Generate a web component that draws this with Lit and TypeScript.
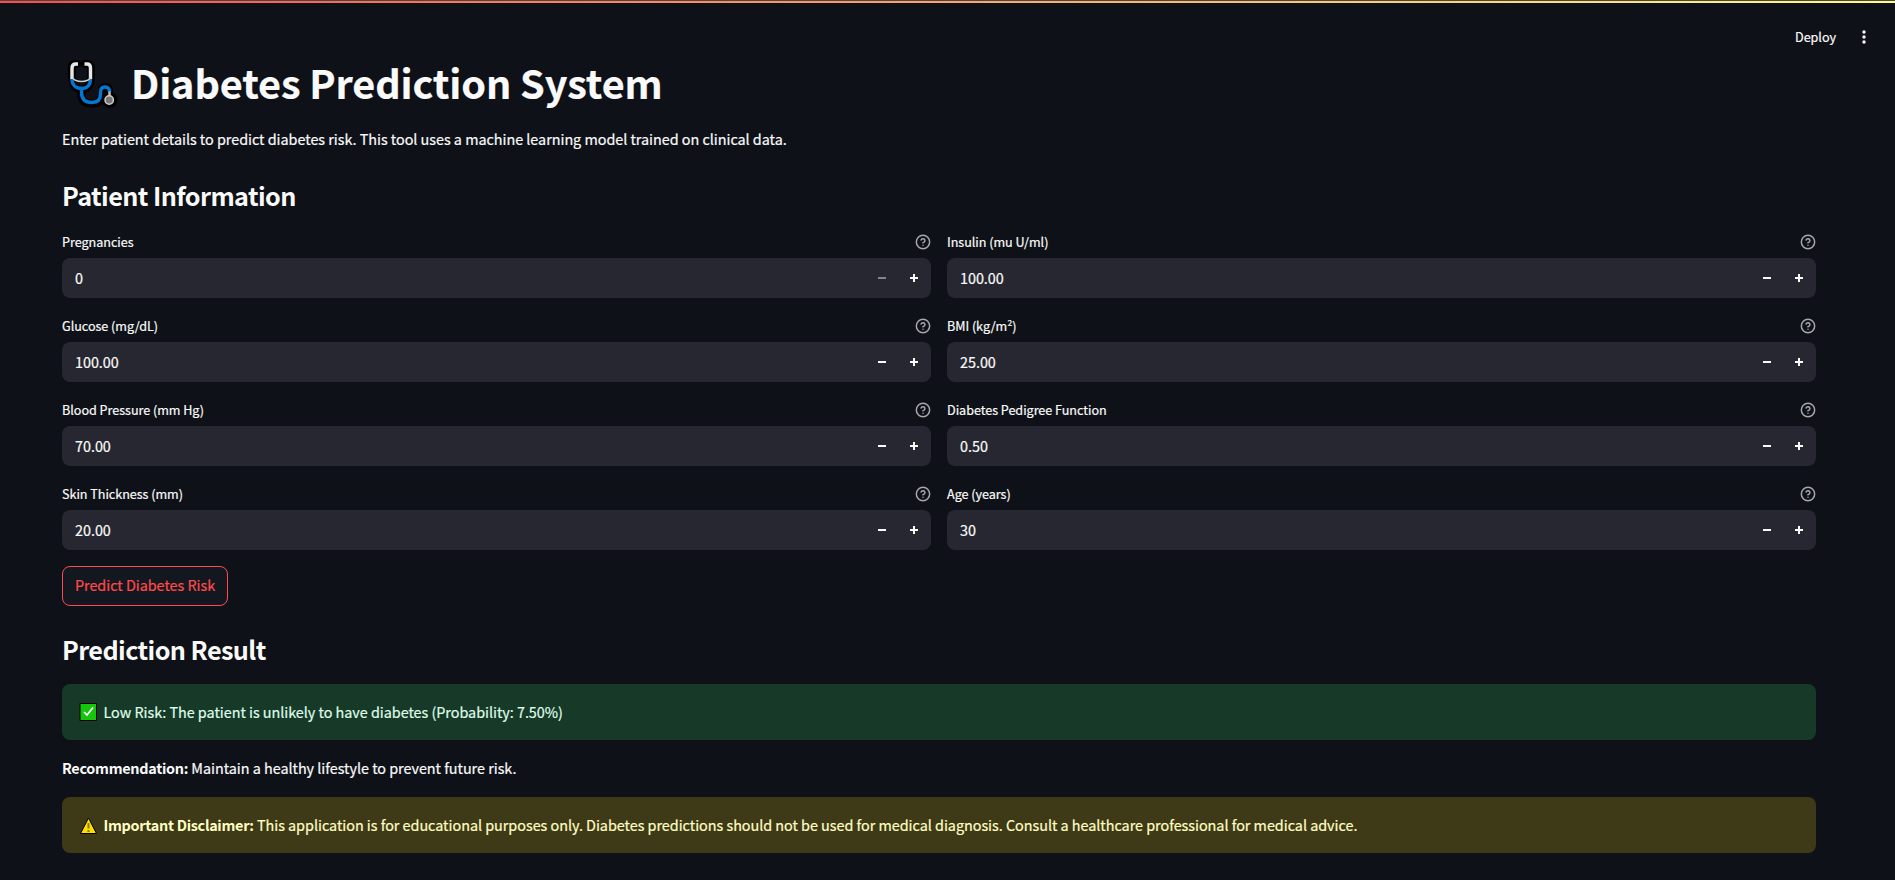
import { LitElement, html, css } from "lit";
import { customElement, property } from "lit/decorators.js";

@customElement("number-field")
class NumberField extends LitElement {
  @property() label = "";
  @property() value = "";
  @property({ type: Boolean }) atMin = false;

  static styles = css`
    :host { display: block; }
    .top { display: flex; justify-content: space-between; height: 28px; }
    .label { font-size: 12.6px; line-height: 24px; }
    .help { width: 16px; height: 16px; margin-top: 4px; display: block; }
    .box { display: flex; align-items: center; height: 40px; border-radius: 8px; background: #262730; }
    .value { flex: 1; padding-left: 13px; font-size: 14.4px; line-height: 40px; }
    .step { width: 32px; height: 40px; display: flex; align-items: center; justify-content: center; color: #fafafa; }
    .step svg { display: block; width: 8px; height: 8px; }
    .step.off { color: #808495; }
    .step.last { margin-right: 1px; }
  `;

  render() {
    return html`
      <div class="top">
        <span class="label">${this.label}</span>
        <svg class="help" viewBox="0 0 24 24" fill="none" stroke="#a6a7aa" stroke-width="2.250" stroke-linecap="round" stroke-linejoin="round">
          <circle cx="12" cy="12" r="10"></circle>
          <path d="M9.09 9a3 3 0 0 1 5.83 1c0 2-3 3-3 3"></path>
          <path d="M12 17h.01"></path>
        </svg>
      </div>
      <div class="box">
        <span class="value">${this.value}</span>
        <span class="step ${this.atMin ? "off" : ""}"><svg viewBox="0 0 8 8"><path fill="currentColor" d="M0 3h8v2H0z"></path></svg></span>
        <span class="step last"><svg viewBox="0 0 8 8"><path fill="currentColor" d="M0 3h3V0h2v3h3v2H5v3H3V5H0z"></path></svg></span>
      </div>`;
  }
}

const LEFT = [
  ["Pregnancies", "0"],
  ["Glucose (mg/dL)", "100.00"],
  ["Blood Pressure (mm Hg)", "70.00"],
  ["Skin Thickness (mm)", "20.00"],
];
const RIGHT = [
  ["Insulin (mu U/ml)", "100.00"],
  ["BMI (kg/m²)", "25.00"],
  ["Diabetes Pedigree Function", "0.50"],
  ["Age (years)", "30"],
];

@customElement("app-root")
class AppRoot extends LitElement {
  static styles = css`
    :host {
      display: block; box-sizing: border-box; height: 880px; overflow: hidden;
      background: #0e1117; color: #fafafa;
      font-family: "Noto Sans CJK SC", "Noto Sans", sans-serif;
      font-size: 14.4px; line-height: 24px; letter-spacing: -0.031px;
      -webkit-text-stroke: 0.2px currentColor;
    }
    .stripe { height: 2px; border-top: 1px solid #45474c; background: linear-gradient(90deg, #ff4b4b, #fffd80); }
    .toolbar { height: 52px; display: flex; justify-content: flex-end; padding-right: 27px; }
    .deploy { font-size: 12.6px; line-height: 24px; margin: 22px 24px 0 0; }
    .dots { width: 8px; height: 16px; margin-top: 26px; }
    .page { padding: 0 79px 0 62px; }
    h1 {
      display: flex; margin: 0; height: 53px; font-size: 39.6px; line-height: 53px; font-weight: 700;
      white-space: nowrap; letter-spacing: -0.1px;
    }
    .steth { width: 60px; height: 56px; margin: 1px 9px 0 0; }
    h2 {
      margin: 0 0 18px; font-size: 25.2px; line-height: 34px; font-weight: 600;
      letter-spacing: -0.57px; -webkit-text-stroke: 0;
    }
    p { margin: 0; }
    .intro { margin: 19px 0 27px; }
    .cols { display: grid; grid-template-columns: 1fr 1fr; gap: 16px; }
    .col { display: grid; gap: 16px; }
    .predict {
      display: block; box-sizing: border-box; width: 166px; height: 40px; margin: 16px 0 26px; padding: 0 0 2px;
      border: 1px solid #ff4b4b; border-radius: 8px; background: #131720; color: #ff4b4b;
      font: inherit; letter-spacing: inherit; line-height: 36px; text-align: center;
    }
    .alert { display: flex; height: 24px; padding: 16px 16px 16px 17px; border-radius: 8px; }
    .ok { background: #173928; color: #dffde9; }
    .warn { background: #3e3917; color: #ffffc2; }
    .rec { margin: 16px 0 17px; }
    .emoji { width: 20px; height: 20px; margin: 2px 4.500px 0 0; }
    b { font-weight: 600; letter-spacing: -0.28px; -webkit-text-stroke: 0; }
  `;

  render() {
    return html`
      <div class="stripe"></div>
      <div class="toolbar">
        <span class="deploy">Deploy</span>
        <svg class="dots" viewBox="0 0 8 16" fill="#fafafa"><circle cx="4" cy="3" r="1.700"></circle><circle cx="4" cy="8" r="1.700"></circle><circle cx="4" cy="13" r="1.700"></circle></svg>
      </div>
      <div class="page">
        <h1>
          <svg class="steth" viewBox="0 0 60 56" fill="none" stroke-linecap="round" stroke-linejoin="round">
            <g stroke="#000" stroke-width="8">
              <path d="M15 8H13Q10 8 10 12V20Q10 33 19.500 33Q29 33 29 20V12Q29 8 26 8H23"></path>
              <path d="M19.500 33V38Q19.500 47.500 30 47.500Q40 47.500 40 38V36Q40 31 43.500 31Q47 31 47 35V42"></path>
              <circle cx="47.500" cy="44" r="4"></circle>
            </g>
            <g stroke-width="3.400" stroke-linecap="butt">
              <path stroke="#0078d4" d="M10 23C10 29 14 32.500 19.500 32.500S28.500 29 28.500 23M19.500 32.500V36Q19.500 46.500 30 46.500Q38.500 46.500 38.500 38V36.500Q38.500 31 43 31Q47.500 31 47.500 36"></path>
              <path stroke="#e6e6e6" d="M16 8H14Q10 8 10 12V23M22.500 8H25Q28.500 8 28.500 12V23"></path>
            </g>
            <path d="M11 22.500Q14 25.500 19.500 25.500T28 22.500" stroke="#cccccc" stroke-width="1.600"></path>
            <path d="M47.500 35.500V40" stroke="#bdbdbd" stroke-width="2.500" stroke-linecap="butt"></path>
            <circle cx="47.200" cy="44" r="4.200" fill="#767676" stroke="#cccccc" stroke-width="1.500"></circle>
          </svg>
          <span class="title">Diabetes Prediction System</span>
        </h1>
        <p class="intro">Enter patient details to predict diabetes risk. This tool uses a machine learning model trained on clinical data.</p>
        <h2>Patient Information</h2>
        <div class="cols">
          ${[LEFT, RIGHT].map(
            (col) => html`<div class="col">
              ${col.map(([l, v]) => html`<number-field .label=${l} .value=${v} .atMin=${v === "0"}></number-field>`)}
            </div>`
          )}
        </div>
        <button class="predict">Predict Diabetes Risk</button>
        <h2>Prediction Result</h2>
        <div class="alert ok">
          <svg class="emoji" viewBox="0 0 20 20"><path d="M1 1.500h16.500v17h-16.500z" fill="#16c60c" stroke="#000" stroke-width="1"></path><path d="M5 10l3 3 6-7.500" fill="none" stroke="#fff" stroke-width="1.700"></path></svg>
          <span>Low Risk: The patient is unlikely to have diabetes (Probability: 7.50%)</span>
        </div>
        <p class="rec"><b>Recommendation:</b> Maintain a healthy lifestyle to prevent future risk.</p>
        <div class="alert warn">
          <svg class="emoji" viewBox="0 0 20 20"><path d="M9.500 3L17.500 18.500H1.500z" fill="#ffde00" stroke="#000" stroke-width="1" stroke-linejoin="round"></path><path d="M9.500 8v5.500M9.500 15v2" stroke="#8a7a10" stroke-width="2"></path></svg>
          <span><b>Important Disclaimer:</b> This application is for educational purposes only. Diabetes predictions should not be used for medical diagnosis. Consult a healthcare professional for medical advice.</span>
        </div>
      </div>`;
  }
}
